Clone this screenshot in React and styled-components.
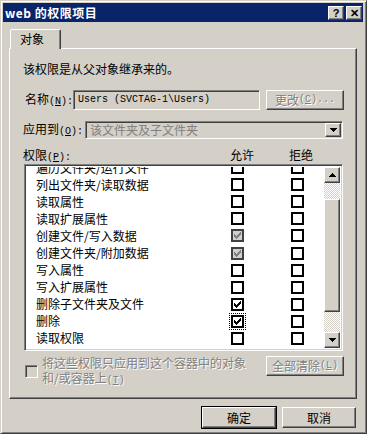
import React from "react";
import styled, { createGlobalStyle, css } from "styled-components";

const FACE = "#d4d0c8";
const SHADOW = "#808080";
const DARK = "#404040";

const Global = createGlobalStyle`
  html, body { margin: 0; padding: 0; background: ${FACE}; }
  body { font-family: "Noto Sans CJK SC", "Noto Sans", sans-serif; font-size: 12px; }
  * { box-sizing: border-box; }
`;

const raised = css`
  border: 1px solid;
  border-color: #fff ${DARK} ${DARK} #fff;
  box-shadow: inset -1px -1px 0 ${SHADOW}, inset 1px 1px 0 ${FACE};
`;

const sunken = css`
  border: 1px solid;
  border-color: ${SHADOW} #fff #fff ${SHADOW};
  box-shadow: inset 1px 1px 0 ${DARK}, inset -1px -1px 0 ${FACE};
`;

const Window = styled.div`
  width: 367px;
  height: 434px;
  background: ${FACE};
  border: 1px solid;
  border-color: ${FACE} ${DARK} ${DARK} ${FACE};
  box-shadow: inset 1px 1px 0 #fff, inset -1px -1px 0 ${SHADOW};
  padding: 2px 3px 3px 2px;
  display: flex;
  flex-direction: column;
  line-height: 14px;
`;

const TitleBar = styled.div`
  height: 19px;
  background: #0a246a;
  display: flex;
  align-items: center;
  padding: 0 1px 0 2px;
  color: #fff;
  font-weight: bold;
  font-size: 12px;
`;

const TitleText = styled.span`
  flex: 1;
  letter-spacing: 0.5px;
`;

const TitleBtn = styled.div`
  width: 16px;
  height: 14px;
  margin-left: 2px;
  background: ${FACE};
  ${raised};
  display: flex;
  align-items: center;
  justify-content: center;
  color: #000;
  font-family: "Liberation Sans", sans-serif;
  font-weight: bold;
  font-size: 11px;
  line-height: 10px;
`;

const Body = styled.div`
  flex: 1;
  display: flex;
  flex-direction: column;
  padding: 7px 6px 0 6px;
`;

const TabStrip = styled.div`
  display: flex;
  height: 19px;
  padding-left: 1px;
  position: relative;
  z-index: 1;
`;

const Tab = styled.div`
  width: 51px;
  height: 20px;
  background: ${FACE};
  border: 1px solid;
  border-bottom: none;
  border-color: #fff ${DARK} transparent #fff;
  box-shadow: inset -1px 0 0 ${SHADOW};
  border-radius: 2px 2px 0 0;
  padding: 2px 0 0 9px;
  color: #000;
`;

const Panel = styled.div`
  height: 351px;
  ${raised};
  background: ${FACE};
  display: flex;
  flex-direction: column;
  padding: 13px 12px 0 13px;
`;

const Note = styled.div`
  height: 14px;
  color: #000;
  margin-bottom: 14px;
`;

const FieldRow = styled.div`
  display: flex;
  align-items: center;
  height: 20px;
  margin-bottom: ${(p) => p.$mb || 0}px;
`;

const Label = styled.span`
  width: ${(p) => p.$w}px;
  flex: none;
  color: #000;
  white-space: nowrap;
  padding-left: ${(p) => p.$pl || 0}px;
`;

const Latin = styled.span`
  font-family: "Liberation Mono", monospace;
  font-size: 10px;
`;

const TextBox = styled.div`
  width: ${(p) => p.$w}px;
  height: ${(p) => p.$h}px;
  ${sunken};
  background: ${FACE};
  display: flex;
  align-items: center;
  padding: 0 4px;
  color: ${(p) => (p.$disabled ? SHADOW : "#000")};
  font-family: ${(p) => (p.$mono ? `"Liberation Mono", monospace` : "inherit")};
  font-size: ${(p) => (p.$mono ? "10px" : "12px")};
  white-space: nowrap;
`;

const Button = styled.div`
  width: ${(p) => p.$w}px;
  height: ${(p) => p.$h || 20}px;
  margin-left: ${(p) => p.$ml || 0}px;
  background: ${FACE};
  ${raised};
  display: flex;
  align-items: center;
  justify-content: center;
  color: ${(p) => (p.$disabled ? SHADOW : "#000")};
  text-shadow: ${(p) => (p.$disabled ? "1px 1px 0 #fff" : "none")};
  white-space: nowrap;
  flex: none;
  ${(p) =>
    p.$default &&
    css`
      outline: 1px solid #000;
      outline-offset: 0;
    `}
`;

const DropArrow = styled.div`
  width: 16px;
  height: 14px;
  margin-left: auto;
  margin-right: -3px;
  ${raised};
  background: ${FACE};
  display: flex;
  align-items: center;
  justify-content: center;
`;

const HeaderRow = styled.div`
  display: grid;
  grid-template-columns: 207px 24px 35px 24px;
  height: 14px;
  margin: 8px 0 2px 0;
  color: #000;
`;

const HeaderCell = styled.span`
  grid-column: ${(p) => p.$col};
`;

const ListBox = styled.div`
  width: 319px;
  height: 187px;
  ${sunken};
  background: #fff;
  display: flex;
  padding: 2px;
  margin-left: 1px;
`;

const ListViewport = styled.div`
  flex: 1;
  overflow: hidden;
`;

const ListScroll = styled.div`
  margin-top: -8px;
`;

const Row = styled.div`
  display: grid;
  grid-template-columns: 195px 13px 47px 13px;
  align-items: center;
  height: 17.1px;
  padding-left: 9px;
  color: #000;
  white-space: nowrap;
`;

const Box = styled.div`
  width: 13px;
  height: 13px;
  border: 2px solid ${(p) => (p.$state === "inherited" ? DARK : "#000")};
  background: ${(p) => (p.$state === "inherited" ? FACE : "#fff")};
  display: flex;
  align-items: center;
  justify-content: center;
  ${(p) =>
    p.$focus &&
    css`
      outline: 1px dotted #000;
      outline-offset: 1px;
    `}
`;

const ScrollBar = styled.div`
  width: 16px;
  display: flex;
  flex-direction: column;
`;

const ScrollBtn = styled.div`
  height: 16px;
  ${raised};
  background: ${FACE};
  display: flex;
  align-items: center;
  justify-content: center;
`;

const Track = styled.div`
  height: ${(p) => p.$h}px;
  background: repeating-conic-gradient(#fff 0 25%, ${FACE} 0 50%) 0 0 / 2px 2px;
`;

const Thumb = styled.div`
  height: ${(p) => p.$h}px;
  ${raised};
  background: ${FACE};
`;

const BottomRow = styled.div`
  display: flex;
  align-items: flex-start;
  margin-top: 5px;
`;

const SmallCheck = styled.div`
  width: 13px;
  height: 13px;
  margin-top: 9px;
  margin-left: 2px;
  ${sunken};
  background: ${FACE};
  flex: none;
`;

const DisabledText = styled.div`
  color: ${SHADOW};
  text-shadow: 1px 1px 0 #fff;
  line-height: 15px;
  margin: -1px 0 0 4px;
  width: 224px;
`;

const Footer = styled.div`
  display: flex;
  justify-content: flex-end;
  padding: 8px 1px 0 0;
`;

const Check = ({ color }) => (
  <svg width="7" height="7" viewBox="0 0 7 7" shapeRendering="crispEdges">
    <path
      fill={color}
      d="M0 2h1v3H0z M1 3h1v3H1z M2 4h1v3H2z M3 3h1v3H3z M4 2h1v3H4z M5 1h1v3H5z M6 0h1v3H6z"
    />
  </svg>
);

const Tri = ({ up }) => (
  <svg width="7" height="4" viewBox="0 0 7 4" shapeRendering="crispEdges">
    <path
      fill="#000"
      d={
        up
          ? "M3 0h1v1H3z M2 1h3v1H2z M1 2h5v1H1z M0 3h7v1H0z"
          : "M0 0h7v1H0z M1 1h5v1H1z M2 2h3v1H2z M3 3h1v1H3z"
      }
    />
  </svg>
);

const CheckBox = ({ state, focus }) => (
  <Box $state={state} $focus={focus}>
    {state === "checked" && <Check color="#000" />}
    {state === "inherited" && <Check color={SHADOW} />}
  </Box>
);

const rows = [
  ["遍历文件夹/运行文件", "empty"],
  ["列出文件夹/读取数据", "empty"],
  ["读取属性", "empty"],
  ["读取扩展属性", "empty"],
  ["创建文件/写入数据", "inherited"],
  ["创建文件夹/附加数据", "inherited"],
  ["写入属性", "empty"],
  ["写入扩展属性", "empty"],
  ["删除子文件夹及文件", "checked"],
  ["删除", "checked", true],
  ["读取权限", "empty"],
  ["更改权限", "empty"],
];

export default function App() {
  return (
    <>
      <Global />
      <Window>
        <TitleBar>
          <TitleText>web 的权限项目</TitleText>
          <TitleBtn>?</TitleBtn>
          <TitleBtn>✕</TitleBtn>
        </TitleBar>
        <Body>
          <TabStrip>
            <Tab>对象</Tab>
          </TabStrip>
          <Panel>
            <Note>该权限是从父对象继承来的。</Note>
            <FieldRow $mb={10}>
              <Label $w={50} $pl={2}>
                名称<Latin>(<u>N</u>):</Latin>
              </Label>
              <TextBox $w={188} $h={20} $mono>
                Users (SVCTAG-1\Users)
              </TextBox>
              <Button $w={78} $ml={6} $disabled>
                更改<Latin>(<u>C</u>)...</Latin>
              </Button>
            </FieldRow>
            <FieldRow>
              <Label $w={62}>
                应用到<Latin>(<u>O</u>):</Latin>
              </Label>
              <TextBox $w={258} $h={18} $disabled>
                该文件夹及子文件夹
                <DropArrow>
                  <Tri />
                </DropArrow>
              </TextBox>
            </FieldRow>
            <HeaderRow>
              <HeaderCell $col={1}>
                权限<Latin>(<u>P</u>):</Latin>
              </HeaderCell>
              <HeaderCell $col={2}>允许</HeaderCell>
              <HeaderCell $col={4}>拒绝</HeaderCell>
            </HeaderRow>
            <ListBox>
              <ListViewport>
                <ListScroll>
                  {rows.map(([name, allow, focus]) => (
                    <Row key={name}>
                      <span>{name}</span>
                      <CheckBox state={allow} focus={focus} />
                      <span />
                      <CheckBox state="empty" />
                    </Row>
                  ))}
                </ListScroll>
              </ListViewport>
              <ScrollBar>
                <ScrollBtn>
                  <Tri up />
                </ScrollBtn>
                <Track $h={16} />
                <Thumb $h={115} />
                <Track $h={20} />
                <ScrollBtn>
                  <Tri />
                </ScrollBtn>
              </ScrollBar>
            </ListBox>
            <BottomRow>
              <SmallCheck />
              <DisabledText>
                将这些权限只应用到这个容器中的对象 和/或容器上<Latin>(<u>T</u>)</Latin>
              </DisabledText>
              <Button $w={78} $ml={5} $disabled>
                全部清除<Latin>(<u>L</u>)</Latin>
              </Button>
            </BottomRow>
          </Panel>
          <Footer>
            <Button $w={74} $h={21} $default>
              确定
            </Button>
            <Button $w={74} $h={21} $ml={6}>
              取消
            </Button>
          </Footer>
        </Body>
      </Window>
    </>
  );
}
